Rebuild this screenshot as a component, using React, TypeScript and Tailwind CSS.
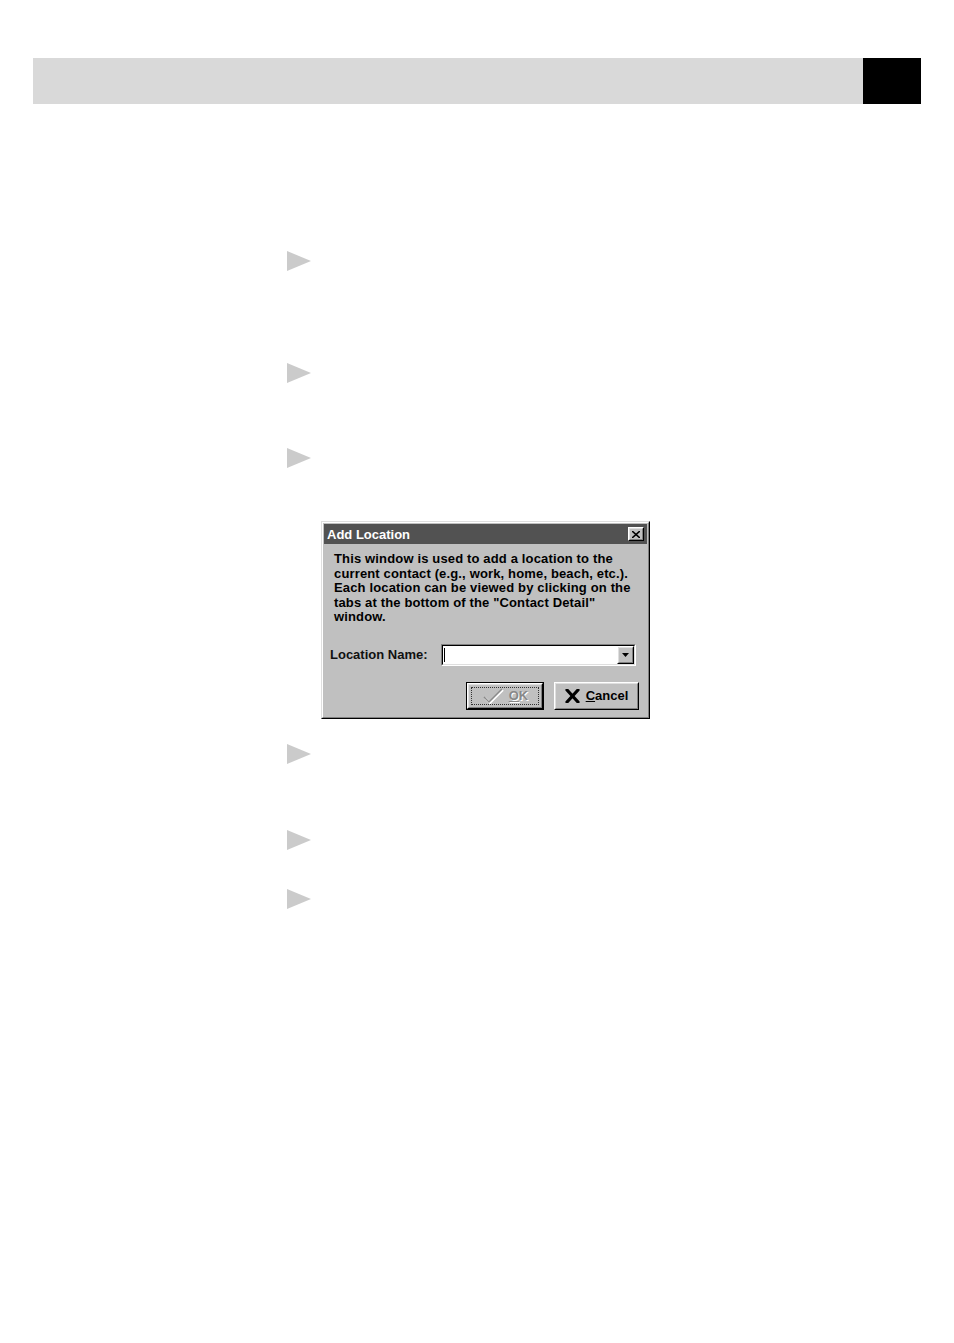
import React from "react";

const Arrow = ({ className = "" }: { className?: string }) => (
  <svg width="24" height="20" viewBox="0 0 24 20" className={"block " + className}>
    <polygon points="0,0 24,10 0,20" fill="#cbcbcb" />
  </svg>
);

const Raised = ({ className = "", children }: { className?: string; children?: React.ReactNode }) => (
  <div className={"border border-t-white border-l-white border-r-black border-b-black " + className}>
    <div className="w-full h-full border border-t-[#dfdfdf] border-l-[#dfdfdf] border-r-[#808080] border-b-[#808080] bg-[#c0c0c0] flex items-center justify-center">
      {children}
    </div>
  </div>
);

export default function App() {
  return (
    <div
      className="w-[954px] h-[1343px] bg-white overflow-hidden"
      style={{ fontFamily: '"Liberation Sans", Arial, sans-serif' }}
    >
      <div className="pt-[58px] mx-[33px]">
        <div className="flex h-[46px]">
          <div className="flex-1 bg-[#d9d9d9]" />
          <div className="w-[58px] bg-black" />
        </div>
      </div>

      <div className="ml-[287px] flex flex-col items-start">
        <Arrow className="mt-[147px]" />
        <Arrow className="mt-[92px]" />
        <Arrow className="mt-[65px]" />

        <div className="ml-[34px] mt-[53px] w-[329px] h-[198px] border border-t-[#dfdfdf] border-l-[#dfdfdf] border-r-black border-b-black bg-[#c0c0c0]">
          <div className="w-full h-full border border-t-white border-l-white border-r-[#808080] border-b-[#808080] p-[1px] flex flex-col">
            <div className="h-[20px] bg-[#525252] flex items-center justify-between pl-[3px] pr-[3px]">
              <span className="text-white font-bold text-[13px] leading-none">Add Location</span>
              <Raised className="w-[16px] h-[14px]">
                <svg width="8" height="7" viewBox="0 0 8 7">
                  <path d="M0 0 L8 7 M8 0 L0 7" stroke="black" strokeWidth="1.6" />
                </svg>
              </Raised>
            </div>

            <div className="pt-[8px] pl-[10px] text-[13px] tracking-[0.15px] leading-[14.5px] font-bold text-black">
              <p>This window is used to add a location to the</p>
              <p>current contact (e.g., work, home, beach, etc.).</p>
              <p>Each location can be viewed by clicking on the</p>
              <p>tabs at the bottom of the "Contact Detail"</p>
              <p>window.</p>
            </div>

            <div className="mt-[19px] pl-[6px] flex items-center">
              <span className="w-[111px] text-[13px] font-bold text-[#111]">Location Name:</span>
              <div className="w-[195px] h-[22px] border border-t-[#808080] border-l-[#808080] border-r-white border-b-white">
                <div className="w-full h-full border border-t-black border-l-black border-r-[#dfdfdf] border-b-[#dfdfdf] bg-white flex items-center justify-between">
                  <div className="ml-[1px] w-[1px] h-[14px] bg-black" />
                  <Raised className="w-[17px] h-[18px]">
                    <svg width="7" height="4" viewBox="0 0 7 4">
                      <polygon points="0,0 7,0 3.5,4" fill="black" />
                    </svg>
                  </Raised>
                </div>
              </div>
            </div>

            <div className="mt-[16px] flex justify-end gap-[10px] pr-[8px]">
              <div className="w-[78px] h-[28px] border border-black">
                <Raised className="w-full h-full">
                  <div className="w-[68px] h-[18px] border border-dotted border-[#333] flex items-center justify-center gap-[5px]">
                    <svg width="22" height="16" viewBox="0 0 22 16">
                      <path d="M2 9 L7 14 L20 1" fill="none" stroke="white" strokeWidth="2" transform="translate(1,1)" />
                      <path d="M2 9 L7 14 L20 1" fill="none" stroke="#8a8a8a" strokeWidth="1.5" />
                    </svg>
                    <span className="text-[13px] font-bold text-[#888] leading-none" style={{ textShadow: "1px 1px 0 #fff" }}>
                      <span className="underline">O</span>K
                    </span>
                  </div>
                </Raised>
              </div>
              <Raised className="w-[85px] h-[28px]">
                <div className="flex items-center gap-[6px]">
                  <svg width="15" height="14" viewBox="0 0 15 14">
                    <path d="M2 1 L13 13 M13 1 L2 13" stroke="black" strokeWidth="3.2" strokeLinecap="round" />
                  </svg>
                  <span className="text-[13px] font-bold text-black leading-none">
                    <span className="underline">C</span>ancel
                  </span>
                </div>
              </Raised>
            </div>
          </div>
        </div>

        <Arrow className="mt-[25px]" />
        <Arrow className="mt-[66px]" />
        <Arrow className="mt-[39px]" />
      </div>
    </div>
  );
}
